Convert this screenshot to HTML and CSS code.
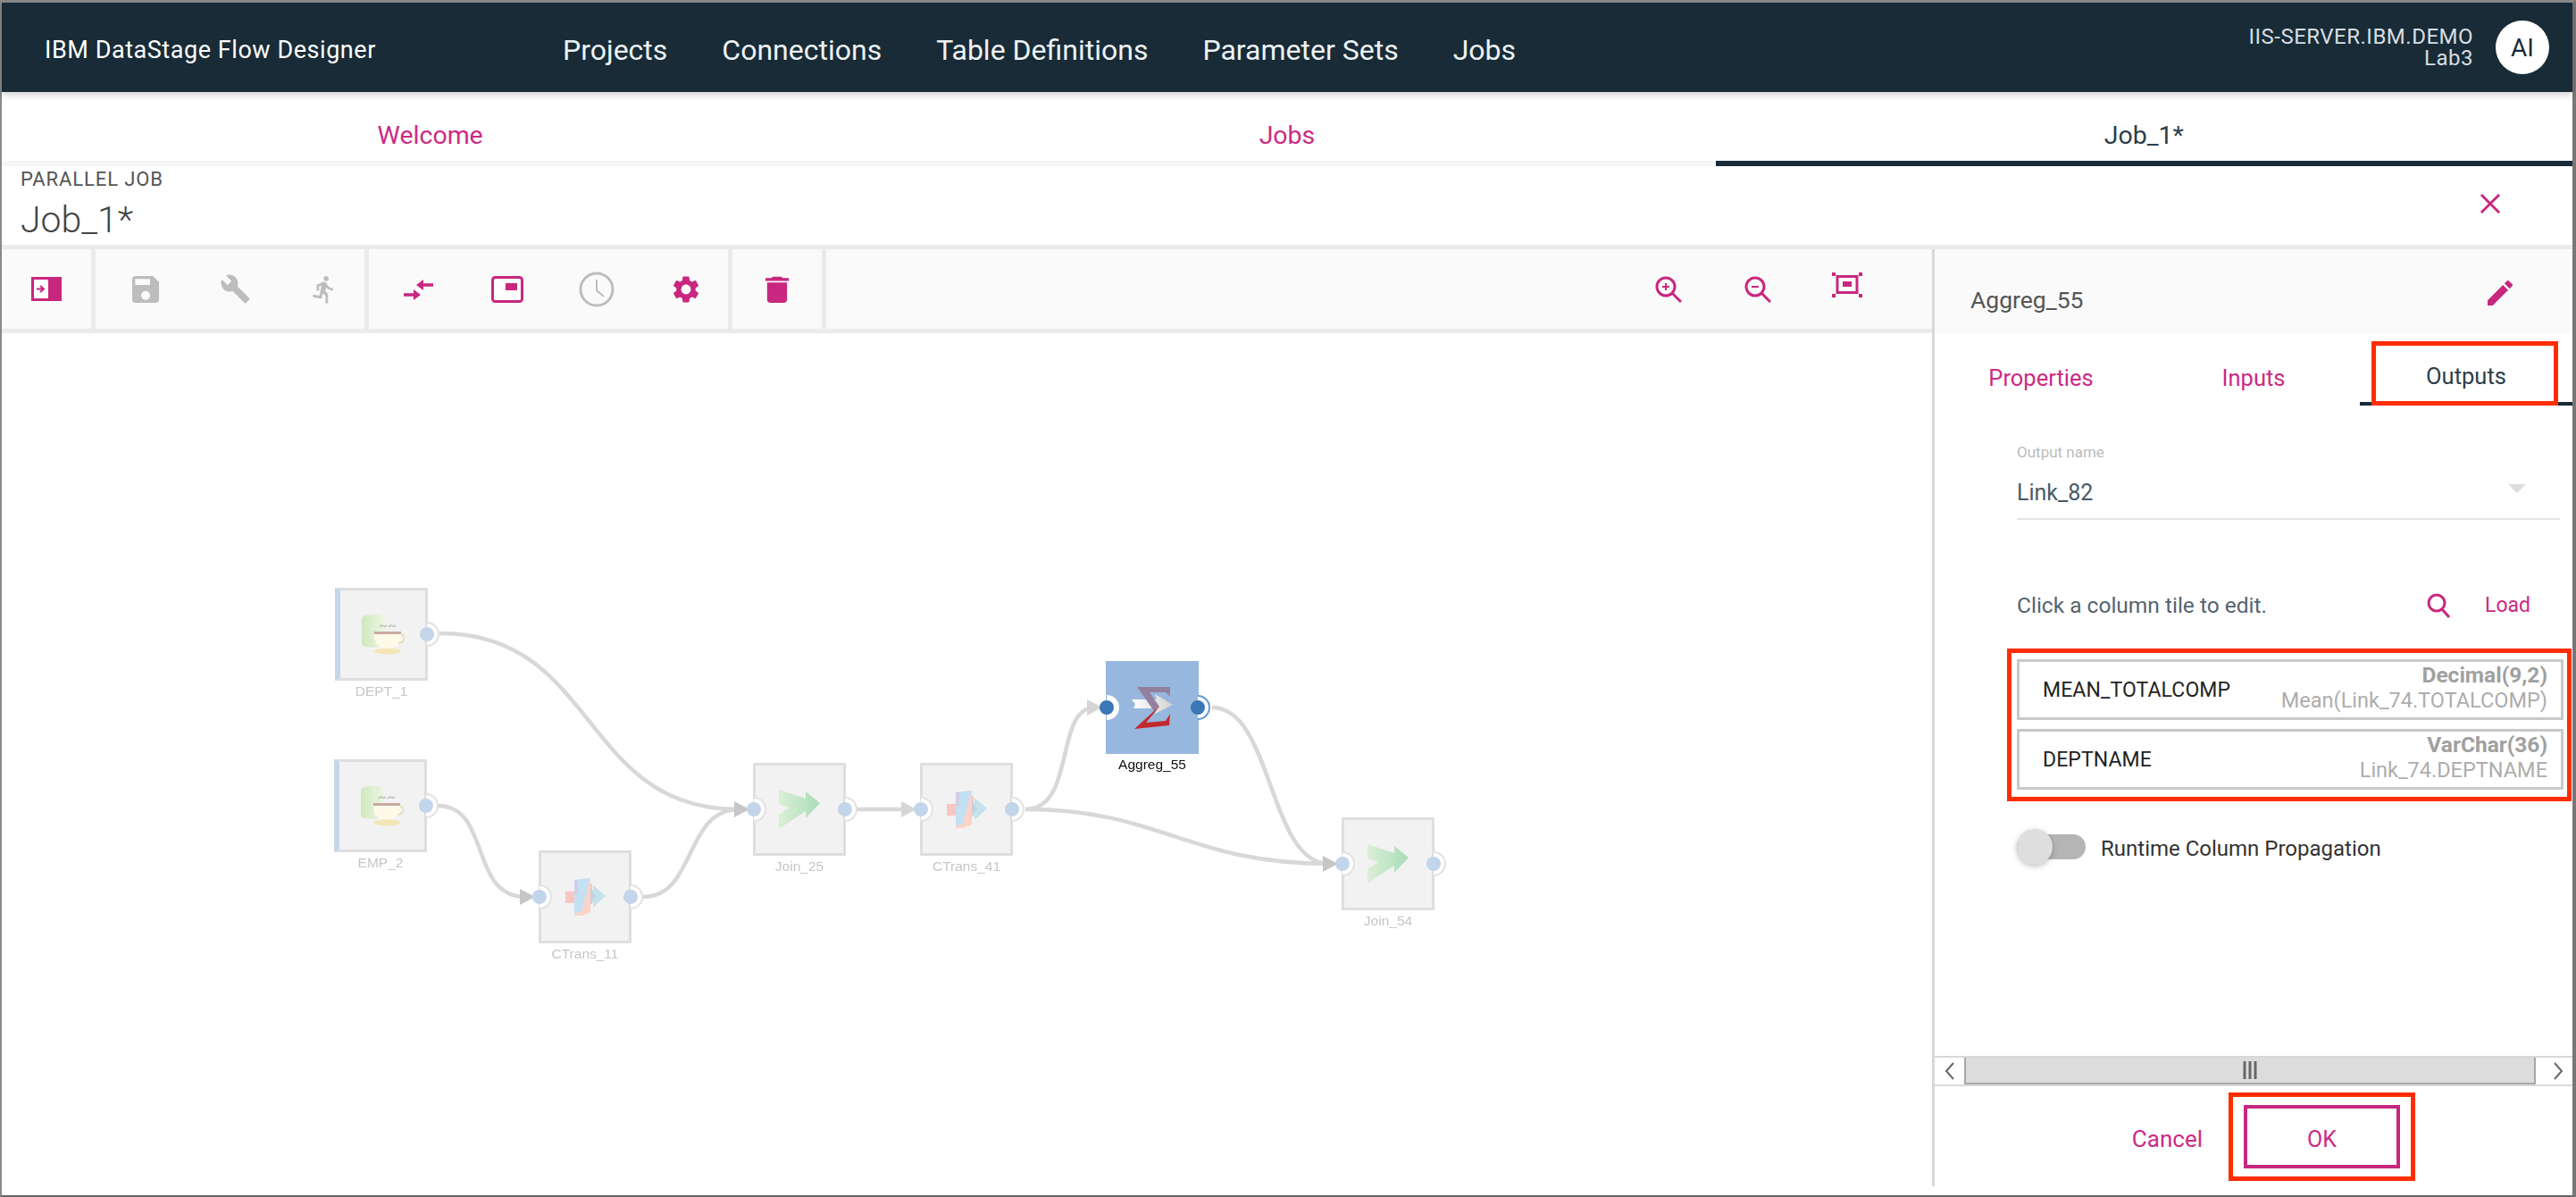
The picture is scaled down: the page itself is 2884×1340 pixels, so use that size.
FILE: index.html
```html
<!DOCTYPE html>
<html lang="en">
<head>
    <meta charset="UTF-8">
    <meta name="viewport" content="width=device-width, initial-scale=1.0">
    <title>IBM DataStage Flow Designer</title>
    <link rel="stylesheet" href="styles.css">
</head>
<body>
    <svg class="defs" width="0" height="0">
        <defs>
            <linearGradient id="join-fill" x1="0" y1="0" x2="1" y2="0">
                <stop offset="0" stop-color="#dcefd6"/>
                <stop offset="1" stop-color="#a9dcb8"/>
            </linearGradient>
            <linearGradient id="db-fill" x1="0" y1="0" x2="1" y2="0">
                <stop offset="0" stop-color="#cfe8bd"/>
                <stop offset="1" stop-color="#eef6e4"/>
            </linearGradient>
            <linearGradient id="arrow-fill" x1="0" y1="0" x2="1" y2="0">
                <stop offset="0" stop-color="#ffffff"/>
                <stop offset="1" stop-color="#d2d2d2"/>
            </linearGradient>
            <symbol id="db-cup" viewBox="0 0 48 45">
                <path d="M0 5c0-7 26-7 26 0v28c0 5-26 5-26 0z" fill="url(#db-fill)"/>
                <path d="M20 14c3-5 5 2 8-2M30 14c3-5 5 2 8-2" fill="none" stroke="#c4c8c4" stroke-width="2"/>
                <path d="M14 19h30v4c0 10-6 15-15 15s-15-5-15-15z" fill="#fff9e8"/>
                <path d="M14 19h30v3H14z" fill="#c9a9a0"/>
                <path d="M44 23c6-1 5 8-3 9" fill="none" stroke="#eadfb8" stroke-width="2"/>
                <ellipse cx="29" cy="41" rx="15" ry="3.500" fill="#f3e6b6"/>
            </symbol>
            <symbol id="transform" viewBox="0 0 45 42">
                <path d="M0 15h12V6h18v23H12v-1H0z" fill="#f7c6c0"/>
                <path d="M10 2l18-2v38l-9 4H10z" fill="#fbd3c8"/>
                <path d="M10 2l18-2-10 38-8 1z" fill="#c3e1f2"/>
                <path d="M10 2h4v16h-4z" fill="#d3cee8"/>
                <path d="M31 8l14 12-14 13v-6h-3V14h3z" fill="#c3e2ee"/>
                <path d="M28 12l6 8-6 8z" fill="#c4d2dc"/>
            </symbol>
            <symbol id="join" viewBox="0 0 46 44">
                <path d="M0 0l30 10V2l16 13-16 17v-8L0 44V28l12-8-12-4z" fill="url(#join-fill)"/>
            </symbol>
            <symbol id="sigma" viewBox="0 0 46 47">
                <path d="M0 14h28l-2-6 20 12-20 10 2-6H2l2-5z" fill="url(#arrow-fill)"/>
                <path d="M6 0h37v11l-5-5H20l11 16-6 5z" fill="#93809f"/>
                <path d="M25 27l6-5-15 18 22-2 5-8-1 13-39 4z" fill="#c22a2c"/>
            </symbol>
        </defs>
    </svg>

    <div class="app">
        <header class="topbar">
            <div class="brand">IBM DataStage Flow Designer</div>
            <nav class="main-nav">
                <a>Projects</a>
                <a>Connections</a>
                <a>Table Definitions</a>
                <a>Parameter Sets</a>
                <a>Jobs</a>
            </nav>
            <div class="server">
                <div>IIS-SERVER.IBM.DEMO</div>
                <div>Lab3</div>
            </div>
            <div class="avatar">AI</div>
        </header>

        <nav class="tabs">
            <a>Welcome</a>
            <a>Jobs</a>
            <a class="active">Job_1*</a>
        </nav>

        <div class="job-head">
            <div>
                <div class="job-type">PARALLEL JOB</div>
                <div class="job-name">Job_1*</div>
            </div>
            <svg class="close" viewBox="0 0 24 24"><path d="M1 1l22 22M23 1L1 23" fill="none" stroke="#c8277f" stroke-width="3"/></svg>
        </div>

        <div class="workspace">
            <div class="editor">
                <div class="toolbar">
                    <div class="tool-group first">
                        <span class="tool">
                            <svg width="34" height="27" viewBox="0 0 34 27"><path d="M1.500 1.500h31v24h-31z" fill="#fff" stroke="#c8277f" stroke-width="3"/><path d="M19 1h15v25H19z" fill="#c8277f"/><path d="M6 13.500h7M10 10l4 3.500-4 3.500" fill="none" stroke="#c8277f" stroke-width="2"/></svg>
                        </span>
                    </div>
                    <div class="tool-group second">
                        <span class="tool">
                            <svg width="30" height="30" viewBox="3 3 18 18"><path d="M17 3H5c-1.110 0-2 .9-2 2v14c0 1.100.89 2 2 2h14c1.100 0 2-.9 2-2V7l-4-4zm-5 16c-1.660 0-3-1.340-3-3s1.340-3 3-3 3 1.340 3 3-1.340 3-3 3zm3-10H5V5h10v4z" fill="#bdbdbd"/></svg>
                        </span>
                        <span class="tool">
                            <svg width="35" height="35" viewBox="0 0 24 24"><path d="M22.700 19l-9.100-9.100c.9-2.300.4-5-1.500-6.900-2-2-5-2.400-7.400-1.300L9 6 6 9 1.600 4.700C.4 7.100.9 10.100 2.900 12.100c1.900 1.900 4.600 2.400 6.900 1.500l9.100 9.100c.4.4 1 .4 1.400 0l2.300-2.300c.5-.4.5-1.100.1-1.400z" fill="#bdbdbd"/></svg>
                        </span>
                        <span class="tool">
                            <svg width="34" height="36" viewBox="0 0 24 24"><path d="M13.490 5.480c1.100 0 2-.9 2-2s-.9-2-2-2-2 .9-2 2 .9 2 2 2zm-3.600 13.900l1-4.400 2.100 2v6h2v-7.500l-2.100-2 .6-3c1.300 1.500 3.300 2.500 5.500 2.500v-2c-1.900 0-3.500-1-4.300-2.400l-1-1.600c-.4-.6-1-1-1.700-1-.3 0-.5.1-.8.1l-5.200 2.200v4.700h2v-3.400l1.800-.7-1.600 8.100-4.900-1-.4 2 7 1.400z" fill="#bdbdbd"/></svg>
                        </span>
                    </div>
                    <div class="tool-group third">
                        <span class="tool">
                            <svg width="33" height="24" viewBox="0 0 33 24"><path d="M33 7H20M0 18h13" fill="none" stroke="#c8277f" stroke-width="3.500"/><path d="M14 7l8-6v12zM19 18l-8-6v12z" fill="#c8277f"/></svg>
                        </span>
                        <span class="tool">
                            <svg width="36" height="30" viewBox="0 0 36 30"><rect x="1.500" y="1.500" width="33" height="27" rx="3" fill="#fff" stroke="#c8277f" stroke-width="3"/><path d="M16 8h13v8H16z" fill="#c8277f"/></svg>
                        </span>
                        <span class="tool">
                            <svg width="40" height="40" viewBox="0 0 40 40"><circle cx="20" cy="20" r="18" fill="none" stroke="#bdbdbd" stroke-width="3"/><path d="M20 9v12l8 7" fill="none" stroke="#bdbdbd" stroke-width="2"/></svg>
                        </span>
                        <span class="tool">
                            <svg width="36" height="36" viewBox="0 0 24 24"><path d="M19.140 12.940c.04-.3.06-.61.06-.94 0-.32-.02-.64-.07-.94l2.030-1.580a.49.49 0 00.12-.61l-1.920-3.320a.488.488 0 00-.59-.22l-2.390.96c-.5-.38-1.030-.7-1.620-.94l-.36-2.540a.484.484 0 00-.48-.41h-3.840c-.24 0-.43.17-.47.41l-.36 2.540c-.59.24-1.130.57-1.620.94l-2.390-.96c-.22-.08-.47 0-.59.22L2.740 8.870c-.12.21-.08.47.12.61l2.030 1.580c-.05.3-.09.63-.09.94s.02.64.07.94l-2.030 1.580a.49.49 0 00-.12.61l1.920 3.320c.12.22.37.29.59.22l2.390-.96c.5.38 1.030.7 1.620.94l.36 2.540c.05.24.24.41.48.41h3.840c.24 0 .44-.17.47-.41l.36-2.540c.59-.24 1.130-.56 1.620-.94l2.390.96c.22.08.47 0 .59-.22l1.920-3.320c.12-.22.07-.47-.12-.61l-2.010-1.580zM12 15.600c-1.980 0-3.600-1.620-3.600-3.600s1.620-3.600 3.600-3.600 3.600 1.620 3.600 3.600-1.620 3.600-3.600 3.600z" fill="#c8277f"/></svg>
                        </span>
                    </div>
                    <div class="tool-group fourth">
                        <span class="tool">
                            <svg width="26" height="31" viewBox="5 2 14 19" preserveAspectRatio="none"><path d="M6 19c0 1.100.9 2 2 2h8c1.100 0 2-.9 2-2V7H6v12zM19 4h-3.500l-1-1h-5l-1 1H5v2h14V4z" fill="#c8277f"/></svg>
                        </span>
                    </div>
                    <div class="tool-right">
                        <span class="tool">
                            <svg width="30" height="30" viewBox="0 0 30 30"><circle cx="12" cy="12" r="10" fill="none" stroke="#c8277f" stroke-width="3"/><path d="M19 19l10 10" stroke="#c8277f" stroke-width="3"/><path d="M8 12h8M12 8v8" stroke="#c8277f" stroke-width="2"/></svg>
                        </span>
                        <span class="tool">
                            <svg width="30" height="30" viewBox="0 0 30 30"><circle cx="12" cy="12" r="10" fill="none" stroke="#c8277f" stroke-width="3"/><path d="M19 19l10 10" stroke="#c8277f" stroke-width="3"/><path d="M8 12h8" stroke="#c8277f" stroke-width="2"/></svg>
                        </span>
                        <span class="tool">
                            <svg class="fit-icon" width="36" height="30" viewBox="0 0 36 30"><rect x="7" y="5.500" width="22" height="18" fill="#fff" stroke="#c8277f" stroke-width="3"/><path d="M13 11h10v6H13z" fill="#c8277f"/><path d="M1 1h4v4H1zM31 1h4v4h-4zM1 25h4v4H1zM31 25h4v4h-4z" fill="#c8277f"/></svg>
                        </span>
                    </div>
                </div>

                <div class="canvas">
                    <svg class="links" viewBox="2 373 2161 965">
                        <g fill="none" stroke="#d8d8d8" stroke-width="4.500">
                            <path d="M492 709C670 709 650 906 826 906"/>
                            <path d="M490 902C550 902 525 1004 588 1004"/>
                            <path d="M720 1004C780 1004 765 906 828 906"/>
                            <path d="M958 906H1016"/>
                            <path d="M1148 906C1205 906 1180 792 1226 792"/>
                            <path d="M1148 906C1300 906 1330 967 1488 967"/>
                            <path d="M1357 792C1425 792 1420 967 1488 967"/>
                        </g>
                        <g fill="#c6c6c6">
                            <path d="M822 897l17 9-17 9z"/>
                            <path d="M582 995l17 9-17 9z"/>
                        </g>
                        <g fill="#d6d6d6">
                            <path d="M1009 897l17 9-17 9z"/>
                            <path d="M1217 783l17 9-17 9z"/>
                        </g>
                        <path d="M1481 958l17 9-17 9z" fill="#c6c6c6"/>
                    </svg>

                    <div class="node node-dept">
                        <div class="node-box source">
                            <svg class="node-icon" width="48" height="45"><use href="#db-cup"/></svg>
                            <span class="port out"></span>
                        </div>
                        <div class="node-label">DEPT_1</div>
                    </div>
                    <div class="node node-emp">
                        <div class="node-box source">
                            <svg class="node-icon" width="48" height="45"><use href="#db-cup"/></svg>
                            <span class="port out"></span>
                        </div>
                        <div class="node-label">EMP_2</div>
                    </div>
                    <div class="node node-ctrans11">
                        <div class="node-box">
                            <span class="port in"></span>
                            <svg class="node-icon" width="45" height="42"><use href="#transform"/></svg>
                            <span class="port out"></span>
                        </div>
                        <div class="node-label">CTrans_11</div>
                    </div>
                    <div class="node node-join25">
                        <div class="node-box">
                            <span class="port in"></span>
                            <svg class="node-icon" width="46" height="44"><use href="#join"/></svg>
                            <span class="port out"></span>
                        </div>
                        <div class="node-label">Join_25</div>
                    </div>
                    <div class="node node-ctrans41">
                        <div class="node-box">
                            <span class="port in"></span>
                            <svg class="node-icon" width="45" height="42"><use href="#transform"/></svg>
                            <span class="port out"></span>
                        </div>
                        <div class="node-label">CTrans_41</div>
                    </div>
                    <div class="node node-aggreg selected">
                        <div class="node-box">
                            <span class="port in"></span>
                            <svg class="node-icon" width="46" height="47"><use href="#sigma"/></svg>
                            <span class="port out"></span>
                        </div>
                        <div class="node-label">Aggreg_55</div>
                    </div>
                    <div class="node node-join54">
                        <div class="node-box">
                            <span class="port in"></span>
                            <svg class="node-icon" width="46" height="44"><use href="#join"/></svg>
                            <span class="port out"></span>
                        </div>
                        <div class="node-label">Join_54</div>
                    </div>
                </div>
            </div>

            <aside class="panel">
                <div class="panel-head">
                    <span class="stage-name">Aggreg_55</span>
                    <svg class="edit-icon" width="28" height="28" viewBox="3 3 18 18"><path d="M3 17.250V21h3.750L17.810 9.940l-3.750-3.750L3 17.250zM20.710 7.040a.996.996 0 000-1.410l-2.340-2.340a.996.996 0 00-1.410 0l-1.830 1.830 3.750 3.750 1.830-1.830z" fill="#c8277f"/></svg>
                </div>
                <nav class="panel-tabs">
                    <a>Properties</a>
                    <a>Inputs</a>
                    <a class="active">Outputs</a>
                </nav>
                <div class="panel-body">
                    <div class="field-label">Output name</div>
                    <div class="field-value">
                        <span>Link_82</span>
                        <span class="caret"></span>
                    </div>
                    <div class="columns-head">
                        <span class="hint">Click a column tile to edit.</span>
                        <svg width="26" height="28" viewBox="0 0 26 28"><circle cx="11" cy="11" r="9" fill="none" stroke="#c8277f" stroke-width="3"/><path d="M17 18l8 9" stroke="#c8277f" stroke-width="3"/></svg>
                        <a class="load">Load</a>
                    </div>
                    <div class="column-row">
                        <span class="column-name">MEAN_TOTALCOMP</span>
                        <div class="column-meta">
                            <div class="column-type">Decimal(9,2)</div>
                            <div class="column-source">Mean(Link_74.TOTALCOMP)</div>
                        </div>
                    </div>
                    <div class="column-row">
                        <span class="column-name">DEPTNAME</span>
                        <div class="column-meta">
                            <div class="column-type">VarChar(36)</div>
                            <div class="column-source">Link_74.DEPTNAME</div>
                        </div>
                    </div>
                    <div class="toggle-row">
                        <span class="toggle"></span>
                        <span class="toggle-text">Runtime Column Propagation</span>
                    </div>
                </div>
                <div class="scrollbar">
                    <span class="scroll-btn">
                        <svg width="12" height="22" viewBox="0 0 12 22"><path d="M10 2L2 11l8 9" fill="none" stroke="#666" stroke-width="2"/></svg>
                    </span>
                    <span class="scroll-thumb">
                        <svg width="16" height="20" viewBox="0 0 16 20"><path d="M2 0v20M8 0v20M14 0v20" stroke="#666" stroke-width="3"/></svg>
                    </span>
                    <span class="scroll-btn">
                        <svg width="12" height="22" viewBox="0 0 12 22"><path d="M2 2l8 9-8 9" fill="none" stroke="#666" stroke-width="2"/></svg>
                    </span>
                </div>
                <div class="panel-foot">
                    <a class="cancel">Cancel</a>
                    <button class="ok">OK</button>
                </div>
            </aside>
        </div>
    </div>

    <!-- red call-outs drawn over the screen -->
    <div class="mark mark-outputs"></div>
    <div class="mark mark-columns"></div>
    <div class="mark mark-ok"></div>
</body>
</html>
```

FILE: styles.css
```css
html, body {
    margin: 0;
    height: 100%;
    overflow: hidden;
}

body {
    font-family: Roboto, "Liberation Sans", sans-serif;
    background-color: #ffffff;
    color: #333333;
}

a {
    cursor: pointer;
}

.defs {
    display: block;
    height: 0;
}

.app {
    box-sizing: border-box;
    height: 1340px;
    display: flex;
    flex-direction: column;
    border-top: 3px solid #8a8a8a;
    border-left: 2px solid #8a8a8a;
    border-right: 4px solid #777777;
    border-bottom: 2px solid #666666;
}

/* top bar */
.topbar {
    height: 100px;
    flex-shrink: 0;
    box-sizing: border-box;
    display: flex;
    align-items: center;
    padding: 0 26px 0 48px;
    background-color: #182b37;
    color: #ffffff;
    box-shadow: 0 3px 8px rgba(0, 0, 0, 0.2);
    position: relative;
}

.brand {
    width: 580px;
    padding-top: 5px;
    font-size: 27px;
    letter-spacing: 0.55px;
}

.main-nav {
    display: flex;
    gap: 61px;
    padding-top: 5px;
    font-size: 32px;
    color: #eef2f4;
}

.server {
    margin-left: auto;
    margin-right: 25px;
    text-align: right;
    font-size: 24px;
    line-height: 24px;
    letter-spacing: 0.5px;
    color: #d8dee2;
}

.avatar {
    width: 60px;
    height: 60px;
    border-radius: 50%;
    display: flex;
    justify-content: center;
    align-items: center;
    background-color: #ffffff;
    color: #182b37;
    font-size: 28px;
}

/* page tabs */
.tabs {
    height: 83px;
    flex-shrink: 0;
    box-sizing: border-box;
    display: grid;
    grid-template-columns: repeat(3, 1fr);
    border-bottom: 6px solid #f6f6f6;
}

.tabs a {
    display: flex;
    justify-content: center;
    align-items: center;
    font-size: 28.500px;
    color: #cc2a84;
    padding-top: 20px;
}

.tabs a.active {
    color: #2c3e4a;
    margin-bottom: -6px;
    border-bottom: 6px solid #182b37;
}

.job-head {
    height: 88px;
    flex-shrink: 0;
    box-sizing: border-box;
    display: flex;
    justify-content: space-between;
    padding: 0 80px 0 21px;
}

.job-type {
    margin-top: 3px;
    font-size: 22px;
    line-height: 24px;
    letter-spacing: 0.9px;
    color: #555555;
}

.job-name {
    margin-top: 10px;
    font-size: 41px;
    line-height: 46px;
    font-weight: 300;
    color: #444444;
}

.close {
    width: 24px;
    height: 22px;
    margin-top: 31px;
}

/* editor */
.workspace {
    flex: 1;
    display: flex;
    min-height: 0;
    border-top: 5px solid #ebebeb;
}

.editor {
    flex: 1;
    display: flex;
    flex-direction: column;
    min-width: 0;
}

.toolbar {
    height: 94px;
    flex-shrink: 0;
    box-sizing: border-box;
    display: flex;
    background-color: #fafafa;
    border-bottom: 5px solid #ebebeb;
}

.tool-group {
    box-sizing: border-box;
    display: flex;
    border-right: 5px solid #ebebeb;
}

.tool-group.first {
    width: 105px;
}

.tool-group.second {
    width: 306px;
    padding-left: 6px;
}

.tool-group.third {
    width: 407px;
    padding-left: 5px;
}

.tool-group.fourth {
    width: 105px;
}

.tool-right {
    margin-left: auto;
    padding-right: 45px;
    display: flex;
}

.tool {
    flex: 0 0 100px;
    display: flex;
    justify-content: center;
    align-items: center;
}

.tool-group.first .tool,
.tool-group.fourth .tool {
    flex: 1;
}

.fit-icon {
    margin-bottom: 9px;
}

.canvas {
    flex: 1;
    position: relative;
}

.links {
    position: absolute;
    left: 0;
    top: 0;
    width: 2161px;
    height: 965px;
}

.node {
    position: absolute;
    width: 104px;
}

/* canvas is a free diagram: left = x - 2, top = y - 373 */
.node-dept { left: 373px; top: 285px; }
.node-emp { left: 372px; top: 477px; }
.node-ctrans11 { left: 601px; top: 579px; }
.node-join25 { left: 841px; top: 481px; }
.node-ctrans41 { left: 1028px; top: 481px; }
.node-aggreg { left: 1236px; top: 367px; }
.node-join54 { left: 1500px; top: 542px; }

.node-box {
    box-sizing: border-box;
    height: 104px;
    position: relative;
    z-index: 0;
    display: flex;
    justify-content: center;
    align-items: center;
    background-color: #f2f2f2;
    border: 3px solid #dedede;
}

.node-box.source {
    border-left: 6px solid #c5d6ea;
}

.node-icon {
    filter: blur(0.5px);
}

.node-label {
    margin-top: 3px;
    text-align: center;
    font-family: "Liberation Sans", Arial, sans-serif;
    font-size: 15.500px;
    line-height: 17px;
    color: #c6c6c6;
    white-space: nowrap;
    filter: blur(0.4px);
}

.port {
    position: absolute;
    top: 41px;
    width: 16px;
    height: 16px;
    border-radius: 50%;
    background-color: #c3d5ea;
}

.port::before {
    content: "";
    position: absolute;
    left: -6px;
    top: -6px;
    width: 28px;
    height: 28px;
    box-sizing: border-box;
    border-radius: 50%;
    background-color: #ffffff;
    border: 2px solid #e2e2e2;
    clip-path: inset(0 0 0 50%);
    z-index: -1;
}

.port.in {
    left: -10px;
}

.port.out {
    right: -10px;
}

.selected .node-box {
    background-color: #97b7de;
    border-color: #97b7de;
}

.selected .node-label {
    color: #111111;
}

.selected .port {
    background-color: #3b76b6;
}

.selected .port.in::before {
    border-color: #ffffff;
}

.selected .port.out::before {
    border-color: #5f9ad6;
}

/* side panel */
.panel {
    width: 717px;
    flex-shrink: 0;
    box-sizing: border-box;
    margin-bottom: 10px;
    display: flex;
    flex-direction: column;
    border-left: 3px solid #d8d8d8;
}

.panel-head {
    height: 94px;
    flex-shrink: 0;
    box-sizing: border-box;
    display: flex;
    justify-content: space-between;
    align-items: center;
    padding: 18px 67px 0 40px;
    background-color: #fafafa;
}

.edit-icon {
    margin-bottom: 14px;
}

.stage-name {
    font-size: 26.500px;
    color: #555555;
}

.panel-tabs {
    height: 81px;
    flex-shrink: 0;
    box-sizing: border-box;
    display: grid;
    grid-template-columns: repeat(3, 1fr);
}

.panel-tabs a {
    display: flex;
    justify-content: center;
    align-items: center;
    padding-top: 18px;
    font-size: 25.500px;
    color: #cc2a84;
}

.panel-tabs a.active {
    color: #2c3e4a;
    border-bottom: 4px solid #182b37;
}

.panel-body {
    padding: 42px 10px 0 92px;
}

.field-label {
    font-size: 17px;
    line-height: 20px;
    color: #bbbbbb;
}

.field-value {
    margin: 21px 4px 0 0;
    padding-bottom: 13px;
    display: flex;
    justify-content: space-between;
    font-size: 25px;
    line-height: 30px;
    color: #4a5a66;
    border-bottom: 2px solid #e4e4e4;
}

.caret {
    width: 0;
    height: 0;
    margin: 5px 38px 0 0;
    border-left: 10px solid transparent;
    border-right: 10px solid transparent;
    border-top: 10px solid #dddddd;
}

.columns-head {
    margin-top: 81px;
    padding-right: 37px;
    display: flex;
    align-items: center;
    line-height: 30px;
}

.hint {
    flex: 1;
    font-size: 24.500px;
    color: #55646f;
}

.load {
    margin-left: 39px;
    font-size: 23px;
    color: #cc2a84;
}

.column-row {
    box-sizing: border-box;
    height: 68px;
    margin-top: 10px;
    padding: 0 15px 0 26px;
    display: flex;
    justify-content: space-between;
    align-items: center;
    border: 3px solid #c8c8c8;
}

.columns-head + .column-row {
    margin-top: 45px;
}

.column-name {
    font-size: 23px;
    font-weight: 400;
    letter-spacing: 0.1px;
    color: #222222;
}

.column-meta {
    text-align: right;
    line-height: 29px;
    margin-top: -4px;
}

.column-type {
    font-size: 24.500px;
    font-weight: 700;
    color: #a0a0a0;
}

.column-source {
    font-size: 23.500px;
    color: #adadad;
}

.toggle-row {
    margin-top: 44px;
    display: flex;
    align-items: center;
    gap: 17px;
}

.toggle {
    width: 77px;
    height: 28px;
    margin: 6px 0;
    position: relative;
    border-radius: 14px;
    background-color: #b5b5b5;
}

.toggle::before {
    content: "";
    position: absolute;
    left: 0;
    top: -6px;
    width: 40px;
    height: 40px;
    border-radius: 50%;
    background-color: #dedede;
    box-shadow: 0 2px 6px rgba(0, 0, 0, 0.25);
}

.toggle-text {
    padding-top: 4px;
    font-size: 24px;
    color: #333333;
}

.scrollbar {
    margin-top: auto;
    height: 34px;
    flex-shrink: 0;
    box-sizing: border-box;
    display: flex;
    border-top: 2px solid #d8d8d8;
    border-bottom: 2px solid #d8d8d8;
}

.scroll-btn {
    width: 33px;
    flex-shrink: 0;
    display: flex;
    justify-content: center;
    align-items: center;
}

.scroll-thumb {
    flex: 1;
    margin-right: 8px;
    display: flex;
    justify-content: center;
    align-items: center;
    background-color: #dcdcdc;
    border: 2px solid #a8a8a8;
    border-top-width: 0;
}

.panel-foot {
    padding: 21px 193px 20px 0;
    display: flex;
    justify-content: flex-end;
    align-items: center;
    gap: 46px;
}

.cancel {
    padding-top: 5px;
    font-size: 26px;
    color: #cc2a84;
}

.ok {
    width: 175px;
    height: 71px;
    padding-top: 6px;
    font-family: inherit;
    font-size: 25px;
    color: #cc2a84;
    background-color: #ffffff;
    border: 4px solid #c8277f;
}

/* annotation boxes */
.mark {
    position: absolute;
    box-sizing: border-box;
    border: 5px solid #ff2d00;
}

.mark-outputs {
    left: 2655px;
    top: 382px;
    width: 209px;
    height: 72px;
}

.mark-columns {
    left: 2247px;
    top: 726px;
    width: 632px;
    height: 171px;
}

.mark-ok {
    left: 2495px;
    top: 1223px;
    width: 209px;
    height: 99px;
}
```
